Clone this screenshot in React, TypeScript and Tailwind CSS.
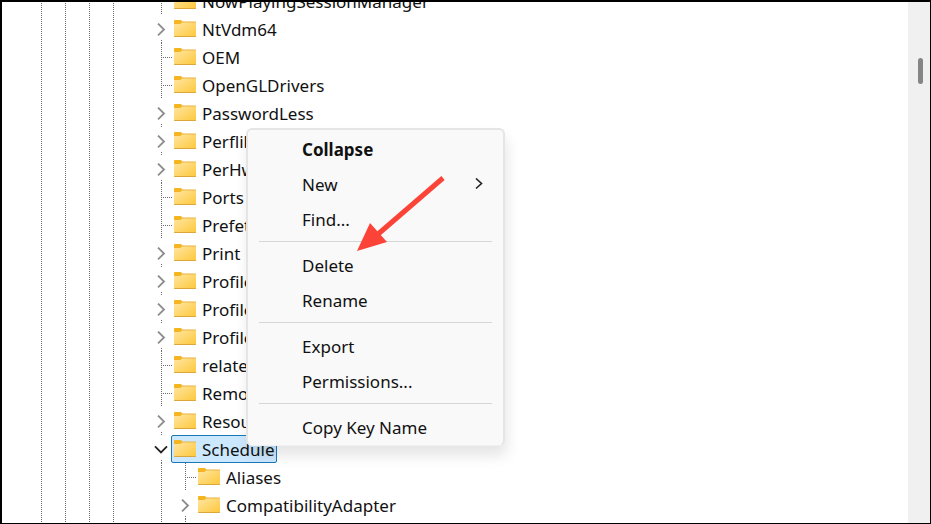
import { useState } from "react";

type Key = {
  name: string;
  children?: boolean;
  open?: boolean;
  nested?: boolean;
};

const keys: Key[] = [
  { name: "NowPlayingSessionManager" },
  { name: "NtVdm64", children: true },
  { name: "OEM" },
  { name: "OpenGLDrivers" },
  { name: "PasswordLess", children: true },
  { name: "Perflib", children: true },
  { name: "PerHwIdStorage", children: true },
  { name: "Ports" },
  { name: "Prefetcher" },
  { name: "Print", children: true },
  { name: "ProfileGuid", children: true },
  { name: "ProfileList", children: true },
  { name: "ProfileNotification", children: true },
  { name: "related.desc" },
  { name: "RemoteRegistry" },
  { name: "ResourceManager", children: true },
  { name: "Schedule", children: true, open: true },
  { name: "Aliases", nested: true },
  { name: "CompatibilityAdapter", children: true, nested: true },
];

const menuGroups = [
  ["Collapse", "New", "Find..."],
  ["Delete", "Rename"],
  ["Export", "Permissions..."],
  ["Copy Key Name"],
];

const dotsY =
  "w-px bg-[repeating-linear-gradient(to_bottom,#6b6b6b_0px_1px,transparent_1px_2px)]";
const dotsX =
  "h-px bg-[repeating-linear-gradient(to_right,transparent_0px_1px,#6b6b6b_1px_2px)]";

function Guide() {
  return (
    <div className="flex w-6 shrink-0 justify-center pl-px">
      <div className={dotsY}></div>
    </div>
  );
}

// the four ancestor levels, then the empty column of the last one
function Ancestors() {
  return (
    <>
      <Guide />
      <Guide />
      <Guide />
      <Guide />
      <div className="w-6 shrink-0"></div>
    </>
  );
}

function Folder() {
  return (
    <svg width="22" height="18" viewBox="0 0 22 18" className="shrink-0" aria-hidden="true">
      <defs>
        <linearGradient id="folder" x1="0" y1="0" x2="1" y2="1">
          <stop offset="0" stopColor="#ffe6a2" />
          <stop offset="1" stopColor="#fdc83c" />
        </linearGradient>
      </defs>
      <path d="M0 4H7L8.4 2H22V16.6H0Z" fill="url(#folder)" />
      <path d="M8 1.4H21.4Q22 1.4 22 2V2.4H8Z" fill="#e9b440" />
      <path d="M0 1Q0 0 1 0H6.6Q7.2 0 7.5 .5L8.4 1.6V2.2L7.2 3.6Q6.9 4 6.4 4H0Z" fill="#f5b521" />
      <path d="M0 16H22V16.2Q22 17 21.2 17H.8Q0 17 0 16.2Z" fill="#dba63a" />
    </svg>
  );
}

function Toggle({ item }: { item: Key }) {
  return (
    <div className="flex w-6 shrink-0 flex-col items-center pl-px">
      <button
        type="button"
        aria-label={`Toggle ${item.name}`}
        className="flex h-[25px] w-6 items-center justify-center pt-1 pr-0.5"
      >
        {item.open ? (
          <svg width="14" height="14" viewBox="0 0 14 14" fill="none" stroke="#222" strokeWidth="1.8">
            <path d="M1 3.4 7 9.4 13 3.4" />
          </svg>
        ) : (
          <svg width="14" height="14" viewBox="0 0 14 14" fill="none" stroke="#8c8c8c" strokeWidth="1.8">
            <path d="M4 0.6 10 6.5 4 12.4" />
          </svg>
        )}
      </button>
      <div className={`h-[3px] ${dotsY}`}></div>
    </div>
  );
}

function Row({ item, selected, onSelect }: { item: Key; selected: boolean; onSelect: () => void }) {
  return (
    <li className="flex h-7" role="treeitem" aria-selected={selected}>
      <Ancestors />
      {item.nested && <Guide />}
      {item.children ? (
        <Toggle item={item} />
      ) : (
        <div className="flex w-6 shrink-0 pl-3">
          <div className={dotsY}></div>
          <div className={`mt-[14px] w-[11px] ${dotsX}`}></div>
        </div>
      )}
      <button
        type="button"
        onClick={onSelect}
        className={`-ml-0.5 flex items-center gap-1.5 border pr-px pl-0.5 whitespace-nowrap ${
          selected ? "rounded-[2px] border-[#1a78b8] bg-[#cce8ff]" : "border-transparent"
        }`}
      >
        <Folder />
        <span className="pt-0.5">{item.name}</span>
      </button>
    </li>
  );
}

function ContextMenu() {
  return (
    <div
      role="menu"
      className="absolute top-[126px] left-[244px] w-[259px] rounded-md border-2 border-b border-[#e5e5e5] border-b-[#f0f0f0] bg-[#f9f9f9] pt-0.5 shadow-[2px_10px_14px_rgba(0,0,0,0.1)]"
    >
      {menuGroups.map((group, index) => (
        <div key={group[0]}>
          {index > 0 && <hr className="mx-[11px] mt-1 mb-1.5 border-[#d6d6d6]" />}
          {group.map((label) => (
            <button
              key={label}
              type="button"
              role="menuitem"
              className={`flex h-[35px] w-full items-center justify-between pr-5 pl-[54px] text-left ${
                label === "Collapse" ? "font-bold" : ""
              }`}
            >
              {label}
              {label === "New" && (
                <svg width="8" height="14" viewBox="0 0 8 14" fill="none" stroke="#222" strokeWidth="1.6">
                  <path d="M1 0.5 6.5 5.5 1 10.5" />
                </svg>
              )}
            </button>
          ))}
        </div>
      ))}
    </div>
  );
}

export default function App() {
  const [selected, setSelected] = useState("Schedule");

  return (
    <div className="relative flex h-screen overflow-hidden border-t-2 border-r border-b border-l-2 border-black bg-white font-['Noto_Sans','Open_Sans',sans-serif] text-[17px] leading-6 text-[#111]">
      <main className="min-w-0 flex-1 overflow-hidden">
        <ul role="tree" aria-label="Registry keys" className="-mt-[15px] pl-[27px]">
          {keys.map((item) => (
            <Row
              key={item.name}
              item={item}
              selected={selected === item.name}
              onSelect={() => setSelected(item.name)}
            />
          ))}
          <li className="flex h-7" aria-hidden="true">
            <Ancestors />
            <Guide />
            <Guide />
          </li>
        </ul>
      </main>
      <div className="flex w-[22px] shrink-0 justify-center bg-[#f0f0f0] pt-14 pl-[3px]">
        <div className="h-[26px] w-[5px] rounded-full bg-[#858585]"></div>
      </div>

      <ContextMenu />
      <svg
        className="pointer-events-none absolute top-[172px] left-[353px]"
        width="92"
        height="80"
        viewBox="0 0 92 80"
        aria-hidden="true"
      >
        <path d="M88 4 22 61" stroke="#fc4338" strokeWidth="5" />
        <path d="M2 77 15 49 32 68Z" fill="#fc4338" />
      </svg>
    </div>
  );
}
